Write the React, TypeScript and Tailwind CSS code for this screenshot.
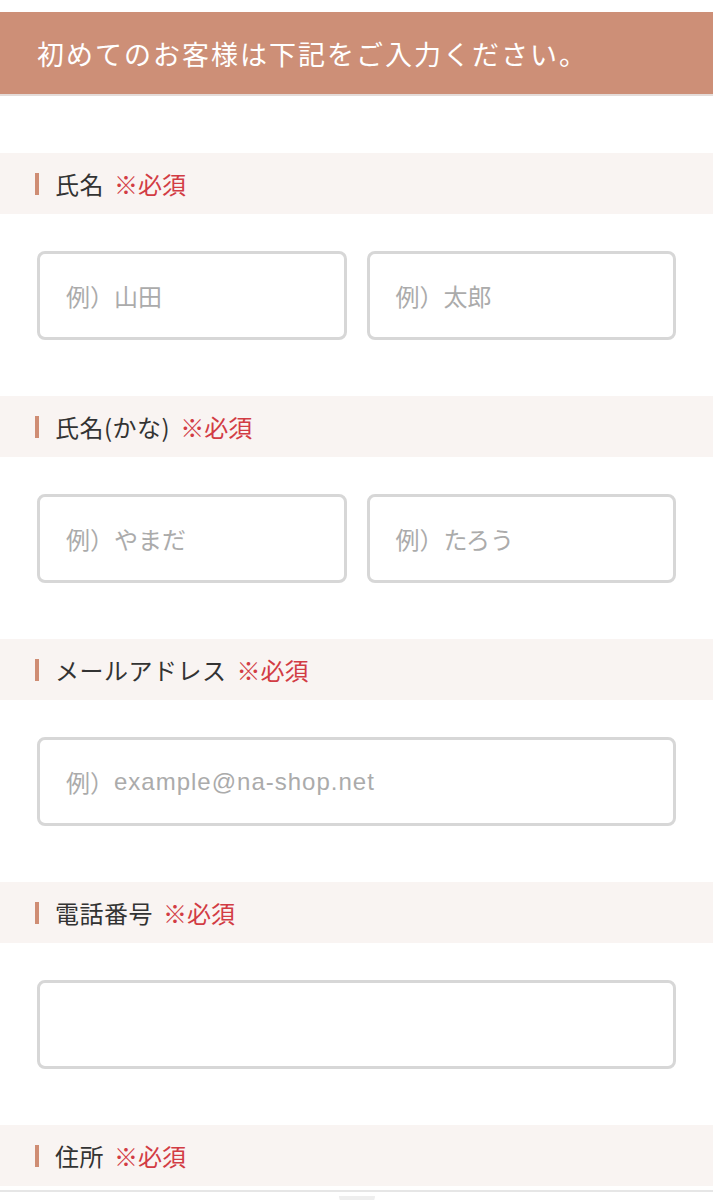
const font = { fontFamily: '"Noto Sans CJK JP", "Noto Sans", sans-serif' };

function SectionHeader({ label }: { label: string }) {
  return (
    <div className="h-[61px] bg-[#f9f4f2] flex items-center pl-[35px]">
      <span className="w-[4px] h-[22px] bg-[#cf8d74] mr-[16px]" />
      <span className="text-[24px] text-[#333333] tracking-[0.5px]">{label}</span>
      <span className="text-[24px] text-[#d23c44] ml-[10px]">※必須</span>
    </div>
  );
}

function Field({ prefix, rest }: { prefix?: string; rest?: string }) {
  return (
    <div className="flex-1 h-[89px] border-[3px] border-[#d7d7d7] rounded-[8px] flex items-center pl-[26px] bg-white">
      <span className="text-[24px] text-[#ababab]">{prefix}</span>
      {rest && (
        <span
          className="text-[24px] text-[#ababab] tracking-[1px]"
          style={{ fontFamily: '"Liberation Sans", "Noto Sans CJK JP", sans-serif' }}
        >
          {rest}
        </span>
      )}
    </div>
  );
}

export default function App() {
  const sections = [
    { label: '氏名', fields: [['例）山田'], ['例）太郎']] },
    { label: '氏名(かな)', fields: [['例）やまだ'], ['例）たろう']] },
    { label: 'メールアドレス', fields: [['例）', 'example@na-shop.net']] },
    { label: '電話番号', fields: [['']] },
  ];

  return (
    <div className="w-[713px] h-[1200px] bg-white overflow-hidden" style={font}>
      <div className="h-[12px]" />
      <div className="h-[84px] bg-[#cd8f77] flex items-center pl-[37px] border-b-[2px] border-[#e4dcd9]">
        <span className="text-[27px] text-white tracking-[2px] mt-[3px]">初めてのお客様は下記をご入力ください。</span>
      </div>
      <div className="h-[57px]" />
      {sections.map((s, i) => (
        <div key={i}>
          <SectionHeader label={s.label} />
          <div className="flex gap-[20px] px-[37px] pt-[37px] pb-[56px]">
            {s.fields.map((f, j) => (
              <Field key={j} prefix={f[0]} rest={f[1]} />
            ))}
          </div>
        </div>
      ))}
      <SectionHeader label="住所" />
      <div className="border-t-[2px] border-[#e6e6e6] mt-[4px] flex justify-center">
        <div className="w-[36px] h-[10px] rounded-b-full bg-[#eeeeee] mt-[4px]" />
      </div>
    </div>
  );
}
